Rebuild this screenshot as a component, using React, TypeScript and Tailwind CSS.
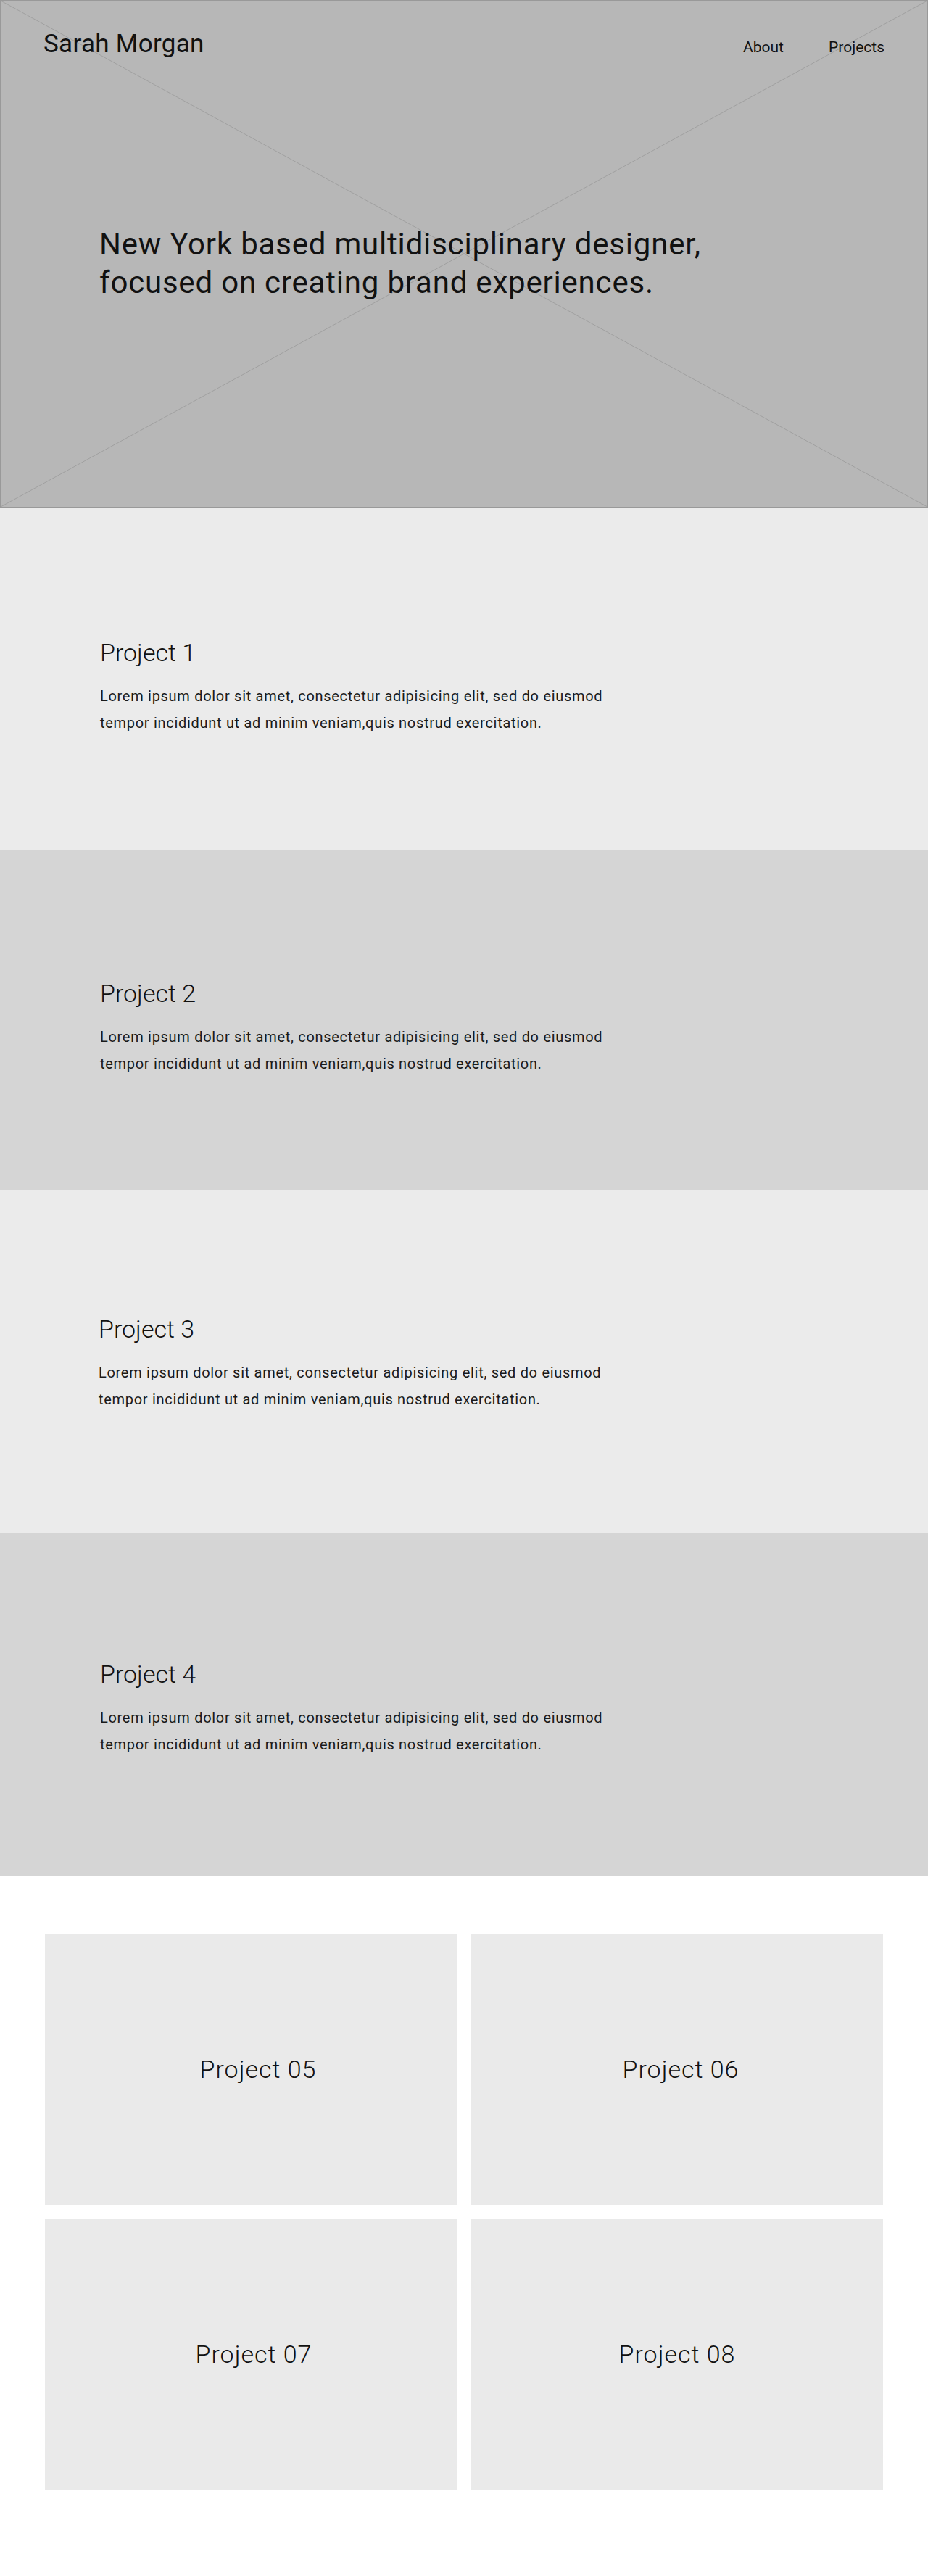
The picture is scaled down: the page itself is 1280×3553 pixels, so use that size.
const font = { fontFamily: 'Roboto, "Liberation Sans", sans-serif' };

const projects = [
  { id: 1, title: 'Project 1', bg: 'bg-[#ebebeb]', box: 'h-[472px] pt-[180px] pl-[138px]' },
  { id: 2, title: 'Project 2', bg: 'bg-[#d5d5d5]', box: 'h-[470px] pt-[178px] pl-[138px]' },
  { id: 3, title: 'Project 3', bg: 'bg-[#ebebeb]', box: 'h-[472px] pt-[171px] pl-[136px]' },
  { id: 4, title: 'Project 4', bg: 'bg-[#d5d5d5]', box: 'h-[473px] pt-[175px] pl-[138px]' },
];

const tiles = [
  { id: 5, title: 'Project 05', shift: 'pl-[20px]' },
  { id: 6, title: 'Project 06', shift: 'pl-[10px]' },
  { id: 7, title: 'Project 07', shift: 'pl-[8px]' },
  { id: 8, title: 'Project 08', shift: 'pl-0' },
];

function Hero() {
  return (
    <header className="relative h-[700px] bg-[#b7b7b7] border border-[#999999]">
      {/* placeholder image cross */}
      <svg className="absolute inset-0 w-full h-full" viewBox="0 0 100 100" preserveAspectRatio="none">
        <line x1="0" y1="0" x2="100" y2="100" stroke="#a0a0a0" strokeWidth="1" vectorEffect="non-scaling-stroke" />
        <line x1="100" y1="0" x2="0" y2="100" stroke="#a0a0a0" strokeWidth="1" vectorEffect="non-scaling-stroke" />
      </svg>

      <div className="relative flex flex-col">
        <nav className="flex items-baseline justify-between pt-[40px] pl-[59px] pr-[59px]">
          <h1 className="text-[35px] leading-[40px] tracking-[0.3px] text-[#111]">Sarah Morgan</h1>
          <ul className="flex items-baseline gap-[62px] text-[21px] text-[#111]">
            <li>About</li>
            <li>Projects</li>
          </ul>
        </nav>

        <p className="mt-[228px] pl-[136px] text-[42px] leading-[53px] tracking-[0.8px] text-[#111]">
          New York based multidisciplinary designer,
          <br />
          focused on creating brand experiences.
        </p>
      </div>
    </header>
  );
}

function ProjectRow({ title, bg, box }: { title: string; bg: string; box: string }) {
  return (
    <section className={bg}>
      <div className={box}>
        <h2 className="text-[34px] leading-[40px] font-light text-[#111]">{title}</h2>
        <p className="mt-[22px] text-[20px] leading-[37px] tracking-[0.7px] text-[#1a1a1a]">
          Lorem ipsum dolor sit amet, consectetur adipisicing elit, sed do eiusmod
          <br />
          tempor incididunt ut ad minim veniam,quis nostrud exercitation.
        </p>
      </div>
    </section>
  );
}

export default function App() {
  return (
    <div className="bg-white" style={font}>
      <Hero />

      {projects.map((p) => (
        <ProjectRow key={p.id} title={p.title} bg={p.bg} box={p.box} />
      ))}

      <section className="px-[62px] pt-[81px] pb-[119px]">
        <div className="grid grid-cols-2 gap-[20px]">
          {tiles.map((t) => (
            <div key={t.id} className={`h-[373px] bg-[#eaeaea] flex items-center justify-center ${t.shift}`}>
              <span className="text-[34px] font-light tracking-[1px] text-[#111]">{t.title}</span>
            </div>
          ))}
        </div>
      </section>
    </div>
  );
}
